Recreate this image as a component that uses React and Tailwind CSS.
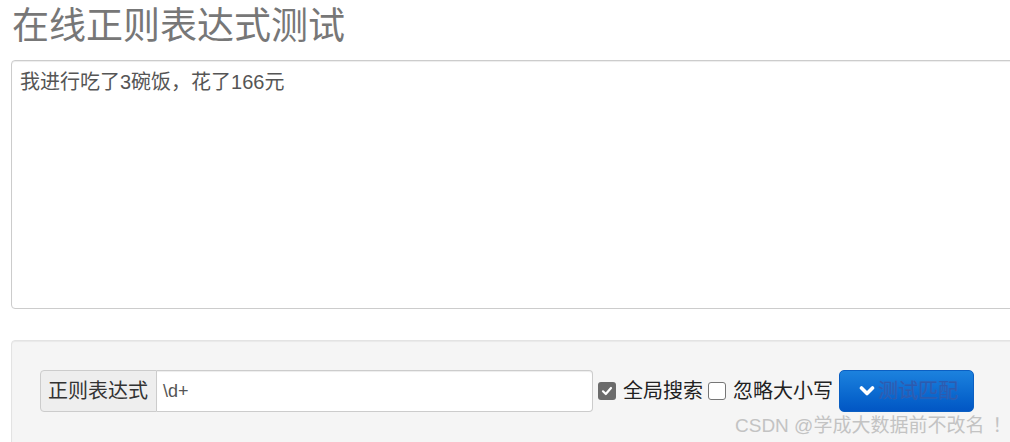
export default function App() {
  const font = { fontFamily: '"Liberation Sans", "Noto Sans CJK SC", sans-serif' };
  return (
    <div className="relative w-[1010px] h-[442px] overflow-hidden bg-white" style={font}>
      <div className="w-[1060px] pl-[11px]">
        <div className="h-[60px] pt-[8px] pl-[1px] text-[37px] leading-[37px] text-[#777]">
          在线正则表达式测试
        </div>
        <div className="h-[249px] border border-[#ccc] rounded-[4px] shadow-[inset_0_1px_1px_rgba(0,0,0,0.075)] px-[8px] pt-[7px] text-[20px] leading-[28px] text-[#555]">
          我进行吃了3碗饭，花了166元
        </div>
        <div className="mt-[31px] h-[140px] bg-[#f5f5f5] border border-[#e3e3e3] rounded-[4px] shadow-[inset_0_1px_1px_rgba(0,0,0,0.05)] pl-[28px] pt-[29px]">
          <div className="flex items-center h-[42px]">
            <div className="flex h-[42px] w-[553px] shrink-0">
              <div className="h-full shrink-0 flex items-center pl-[7px] bg-[#eee] border border-[#ccc] rounded-l-[4px] text-[20px] text-[#333] w-[117px] whitespace-nowrap">
                正则表达式
              </div>
              <div className="h-full flex-1 flex items-center pl-[6px] bg-white border border-l-0 border-[#ccc] rounded-r-[4px] shadow-[inset_0_1px_1px_rgba(0,0,0,0.075)] text-[18px] text-[#555]">
                \d+
              </div>
            </div>
            <div className="ml-[5px] w-[18px] h-[18px] shrink-0 rounded-[3px] bg-[#6b6b6b] flex items-center justify-center">
              <svg width="12" height="12" viewBox="0 0 12 12">
                <path d="M2 6.3 L4.8 9 L10 3" fill="none" stroke="white" strokeWidth="2.2" strokeLinecap="round" strokeLinejoin="round" />
              </svg>
            </div>
            <span className="ml-[7px] text-[20px] text-[#222] whitespace-nowrap">全局搜索</span>
            <div className="ml-[5px] w-[18px] h-[18px] shrink-0 rounded-[3px] bg-white border border-[#767676]" />
            <span className="ml-[7px] text-[20px] text-[#222] whitespace-nowrap">忽略大小写</span>
            <div className="ml-[6px] w-[135px] h-[42px] shrink-0 rounded-[5px] border border-[#0b5fc2] bg-gradient-to-b from-[#1c82de] to-[#0256c4] flex items-center pl-[19px]">
              <svg width="16" height="12" viewBox="0 0 16 12">
                <path d="M2.5 3 L8 8.5 L13.5 3" fill="none" stroke="white" strokeWidth="3.6" strokeLinecap="round" strokeLinejoin="round" />
              </svg>
              <span className="ml-[3px] text-[20px] text-[#2a5bb0] [text-shadow:0_0_1px_#3a6cc0] whitespace-nowrap">测试匹配</span>
            </div>
          </div>
        </div>
      </div>
      <div className="absolute left-[735px] top-[413px] text-[19px] leading-[26px] text-[#c3c3c3] whitespace-nowrap">
        CSDN @学成大数据前不改名<span className="ml-[8px]">！</span>
      </div>
    </div>
  );
}
